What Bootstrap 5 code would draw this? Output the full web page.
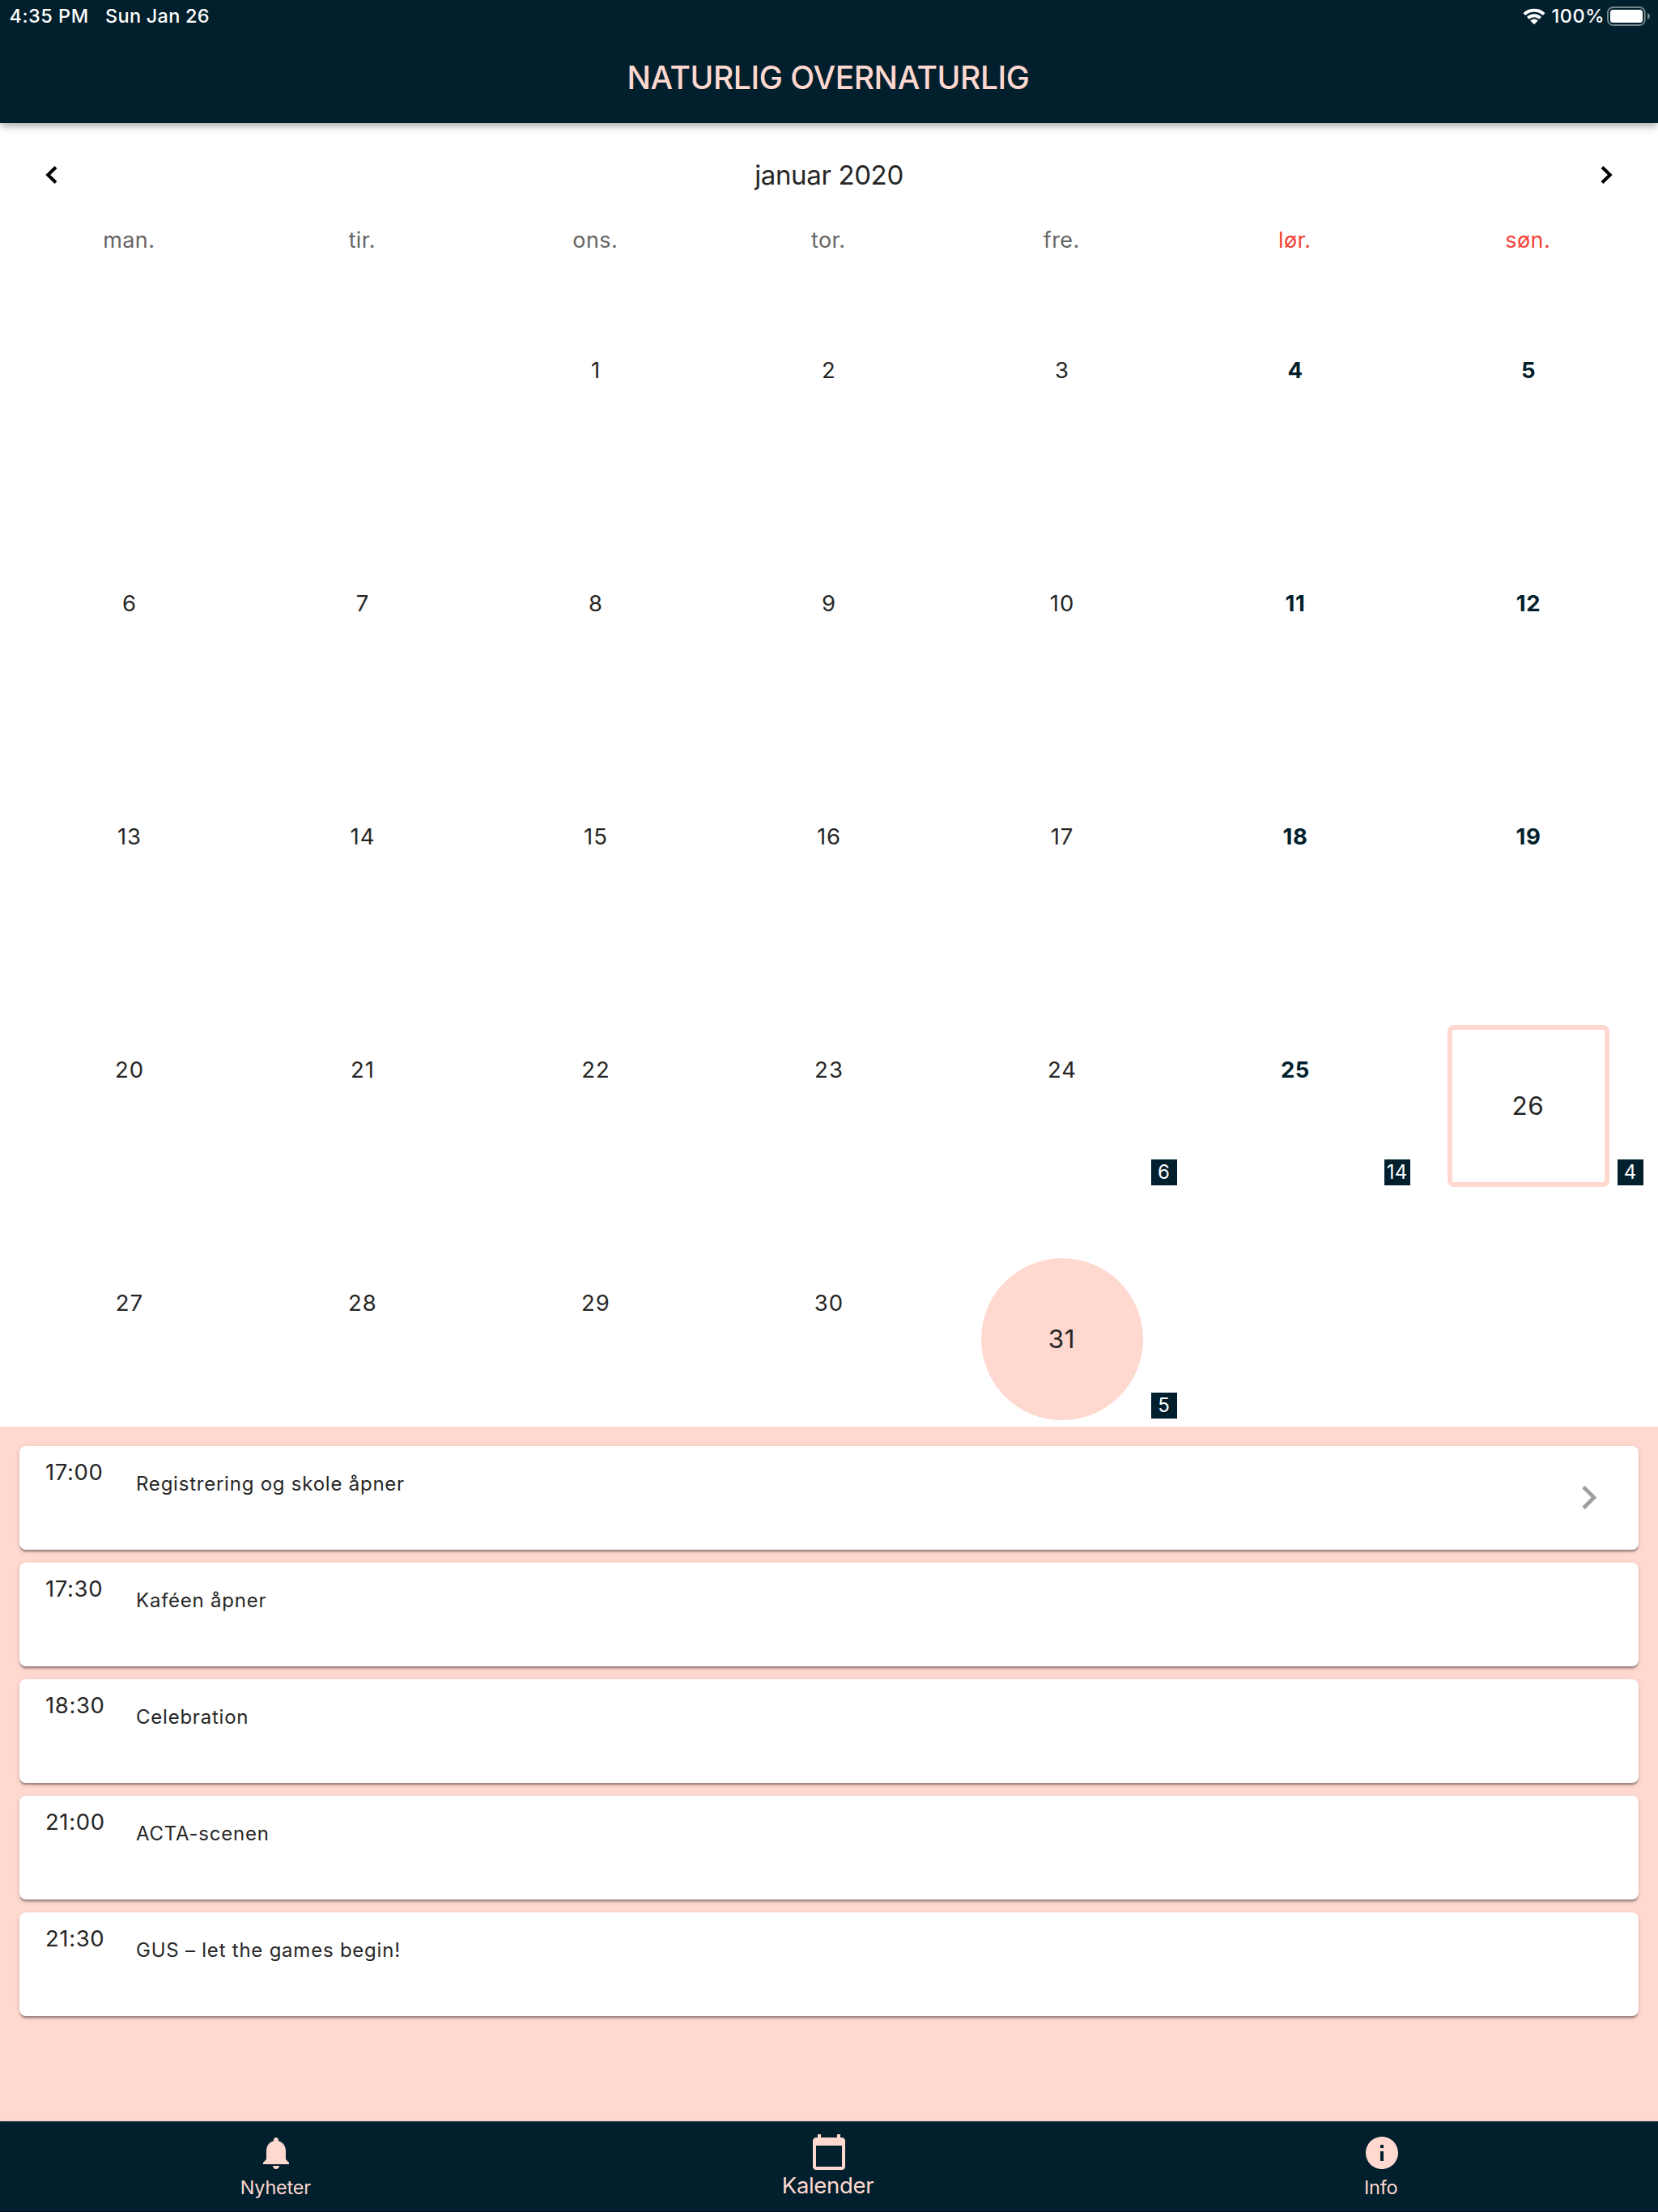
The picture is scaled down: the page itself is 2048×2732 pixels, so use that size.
<!DOCTYPE html>
<html lang="nb">
<head>
<meta charset="utf-8">
<meta name="viewport" content="width=device-width, initial-scale=1">
<title>Naturlig overnaturlig – Kalender</title>
<link rel="stylesheet" href="https://cdn.jsdelivr.net/npm/bootstrap@5.3.0/dist/css/bootstrap.min.css">
<script src="https://cdn.jsdelivr.net/npm/bootstrap@5.3.0/dist/js/bootstrap.bundle.min.js"></script>
<style>
:root{--navy:#011f2c;--blush:#ffd8d0;--ink:#262626}
body{font-family:Inter,"Liberation Sans",sans-serif;color:var(--ink);background:#fff;font-size:27.5px;font-weight:400;line-height:1}
svg{display:block;flex:none}
.app{height:2732px;overflow:hidden}
.topbar{height:152px;background:var(--navy);box-shadow:0 4px 8px -2px rgba(0,0,0,.2),0 4px 10px rgba(0,0,0,.14),0 2px 16px rgba(0,0,0,.1);z-index:2}
.status{height:40px;color:#fff;font-size:23.5px;font-weight:500;padding:0 9px 0 11.5px}
.clock{letter-spacing:.5px;margin-right:20.5px}
.date{letter-spacing:.25px}
.pct{letter-spacing:.5px;margin:0 3px 0 8px}
.title{height:112px;color:var(--blush);font-size:39px;font-weight:500;letter-spacing:-.42px;margin:0;padding-right:2px}
.month{height:128px;padding:0 54px}
.month h2{font-size:33px;font-weight:400;letter-spacing:-.36px;margin:0;line-height:1}
.cal{padding:0 16px;height:1482px}
.weekdays{height:34px;font-size:27px;letter-spacing:.4px;color:#666;padding-bottom:1px}
.weekdays .col{padding-right:1.5px}
.weekend{color:#f44336}
.week{height:288px}
.day{letter-spacing:1px}
.sat-sun{font-weight:700;letter-spacing:.6px;color:var(--navy)}
.pick{width:200px;height:200px;font-size:31.5px;letter-spacing:.6px;padding-right:1px}
.today{border:6px solid var(--blush);border-radius:8px}
.chosen{background:var(--blush)}
.day.end{align-items:end!important}
.count{position:absolute;right:2px;bottom:2px;width:32px;height:32px;background:var(--navy);color:#fff;font-size:24px;font-weight:400;letter-spacing:.1px;padding-right:1px}
.agenda{background:var(--blush);padding:24px;gap:16px}
.event{height:128px;border:0;border-radius:8px;padding:0 52.5px 0 32px;box-shadow:0 4px 2px -1px rgba(0,0,0,.2),0 2px 2px rgba(0,0,0,.14),0 2px 6px rgba(0,0,0,.12);color:var(--ink)}
.time{width:112px;padding-top:18.5px;letter-spacing:.6px}
.what{font-size:24px;letter-spacing:.77px;padding-top:35px}
.tabs{height:112px;background:var(--navy);color:var(--blush);border-bottom:1px solid #000d1a;box-shadow:0 0 3px rgba(0,0,0,.12);z-index:2}
.tab{font-size:23.5px;letter-spacing:-.2px;padding-top:15px;color:inherit;text-decoration:none}
.tab span{padding:7px 2px 0 0}
.tab.on{font-size:27.5px;letter-spacing:-.32px;padding-top:14px}
.tab.on span{padding:4px 3px 0 0}
</style>
</head>
<body>
<div class="app d-flex flex-column">
  <header class="topbar position-relative flex-shrink-0">
    <div class="status d-flex align-items-center">
      <span class="clock">4:35 PM</span><span class="date">Sun Jan 26</span>
      <svg class="ms-auto" width="28" height="20" viewBox="0 0 28 20" fill="#fff"><path d="M14 20 9.6 15.5a6.3 6.3 0 0 1 8.8 0Z" stroke="#fff" stroke-width=".6" stroke-linejoin="round"/><path d="M6.4 12.4a10.8 10.8 0 0 1 15.2 0M1.8 7.6a17.6 17.6 0 0 1 24.4 0" fill="none" stroke="#fff" stroke-width="4"/></svg>
      <span class="pct">100%</span>
      <svg width="54" height="24" viewBox="0 0 54 24"><rect x="1" y="1" width="45.7" height="22" rx="6.5" fill="none" stroke="#fff" stroke-opacity=".45" stroke-width="2"/><rect x="4" y="4" width="40" height="16" rx="3.5" fill="#fff"/><path d="M50 8q3 1.2 3 4t-3 4Z" fill="#fff" fill-opacity=".45"/></svg>
    </div>
    <h1 class="title d-flex align-items-center justify-content-center">NATURLIG OVERNATURLIG</h1>
  </header>

  <main class="bg-white flex-shrink-0">
    <div class="month d-flex align-items-center justify-content-between">
      <svg width="20" height="28" viewBox="0 0 20 28"><path d="M15 4.5 5.2 14 15 23.5" fill="none" stroke="#000" stroke-width="4"/></svg>
      <h2>januar 2020</h2>
      <svg width="20" height="28" viewBox="0 0 20 28"><path d="m5 4.5 9.8 9.5L5 23.5" fill="none" stroke="#000" stroke-width="4"/></svg>
    </div>
    <div class="cal">
      <div class="weekdays row g-0 align-items-center text-center">
        <div class="col">man.</div><div class="col">tir.</div><div class="col">ons.</div><div class="col">tor.</div><div class="col">fre.</div><div class="col weekend">lør.</div><div class="col weekend">søn.</div>
      </div>
      <div id="weeks"></div>
    </div>
  </main>

  <section class="agenda d-flex flex-column flex-grow-1">
    <div class="event card flex-row flex-shrink-0"><div class="time">17:00</div><div class="what">Registrering og skole åpner</div>
      <svg class="ms-auto align-self-center" width="18" height="30" viewBox="0 0 18 30"><path d="M2 1.5 15 14.5 2 27.5" fill="none" stroke="#9e9e9e" stroke-width="4.6"/></svg></div>
    <div class="event card flex-row flex-shrink-0"><div class="time">17:30</div><div class="what">Kaféen åpner</div></div>
    <div class="event card flex-row flex-shrink-0"><div class="time">18:30</div><div class="what">Celebration</div></div>
    <div class="event card flex-row flex-shrink-0"><div class="time">21:00</div><div class="what">ACTA-scenen</div></div>
    <div class="event card flex-row flex-shrink-0"><div class="time">21:30</div><div class="what">GUS – let the games begin!</div></div>
  </section>

  <nav class="tabs row g-0 flex-shrink-0 position-relative">
    <a class="tab col d-flex flex-column align-items-center" href="#">
      <svg width="48" height="48" viewBox="0 0 24 24" fill="currentColor"><path d="M12 22c1.1 0 2-.9 2-2h-4c0 1.1.89 2 2 2zm6-6v-5c0-3.07-1.64-5.64-4.5-6.32V4c0-.83-.67-1.5-1.5-1.5s-1.5.67-1.5 1.5v.68C7.63 5.36 6 7.92 6 11v5l-2 2v1h16v-1l-2-2z"/></svg>
      <span>Nyheter</span></a>
    <a class="tab on col d-flex flex-column align-items-center" href="#">
      <svg width="48" height="48" viewBox="0 0 24 24" fill="currentColor"><path d="M20 3h-1V1h-2v2H7V1H5v2H4c-1.1 0-2 .9-2 2v16c0 1.1.9 2 2 2h16c1.1 0 2-.9 2-2V5c0-1.1-.9-2-2-2zm0 18H4V8h16v13z"/></svg>
      <span>Kalender</span></a>
    <a class="tab col d-flex flex-column align-items-center" href="#">
      <svg width="48" height="48" viewBox="0 0 24 24" fill="currentColor"><path d="M12 2C6.48 2 2 6.48 2 12s4.48 10 10 10 10-4.48 10-10S17.52 2 12 2zm1 15h-2v-6h2v6zm0-8h-2V7h2v2z"/></svg>
      <span>Info</span></a>
  </nav>
</div>
<script>
/* January 2020 starts on a Wednesday: two blank cells lead the first week. */
const counts = {24: 6, 25: 14, 26: 4, 31: 5}, today = 26, chosen = 31;
let html = '';
for (let w = 0; w < 5; w++) {
  html += '<div class="week row g-0">';
  for (let c = 0; c < 7; c++) {
    const d = w * 7 + c - 1, ok = d > 0 && d < 32;
    const mark = d === today ? 'today' : d === chosen ? 'chosen rounded-circle' : '';
    const cls = mark ? ' end' : c > 4 ? ' sat-sun' : '';
    html += `<div class="day col position-relative d-flex align-items-center justify-content-center${cls}">`;
    if (ok) html += mark ? `<div class="pick ${mark} d-flex align-items-center justify-content-center">${d}</div>` : d;
    if (counts[d]) html += `<span class="count d-flex align-items-center justify-content-center">${counts[d]}</span>`;
    html += '</div>';
  }
  html += '</div>';
}
document.getElementById('weeks').innerHTML = html;
</script>
</body>
</html>
